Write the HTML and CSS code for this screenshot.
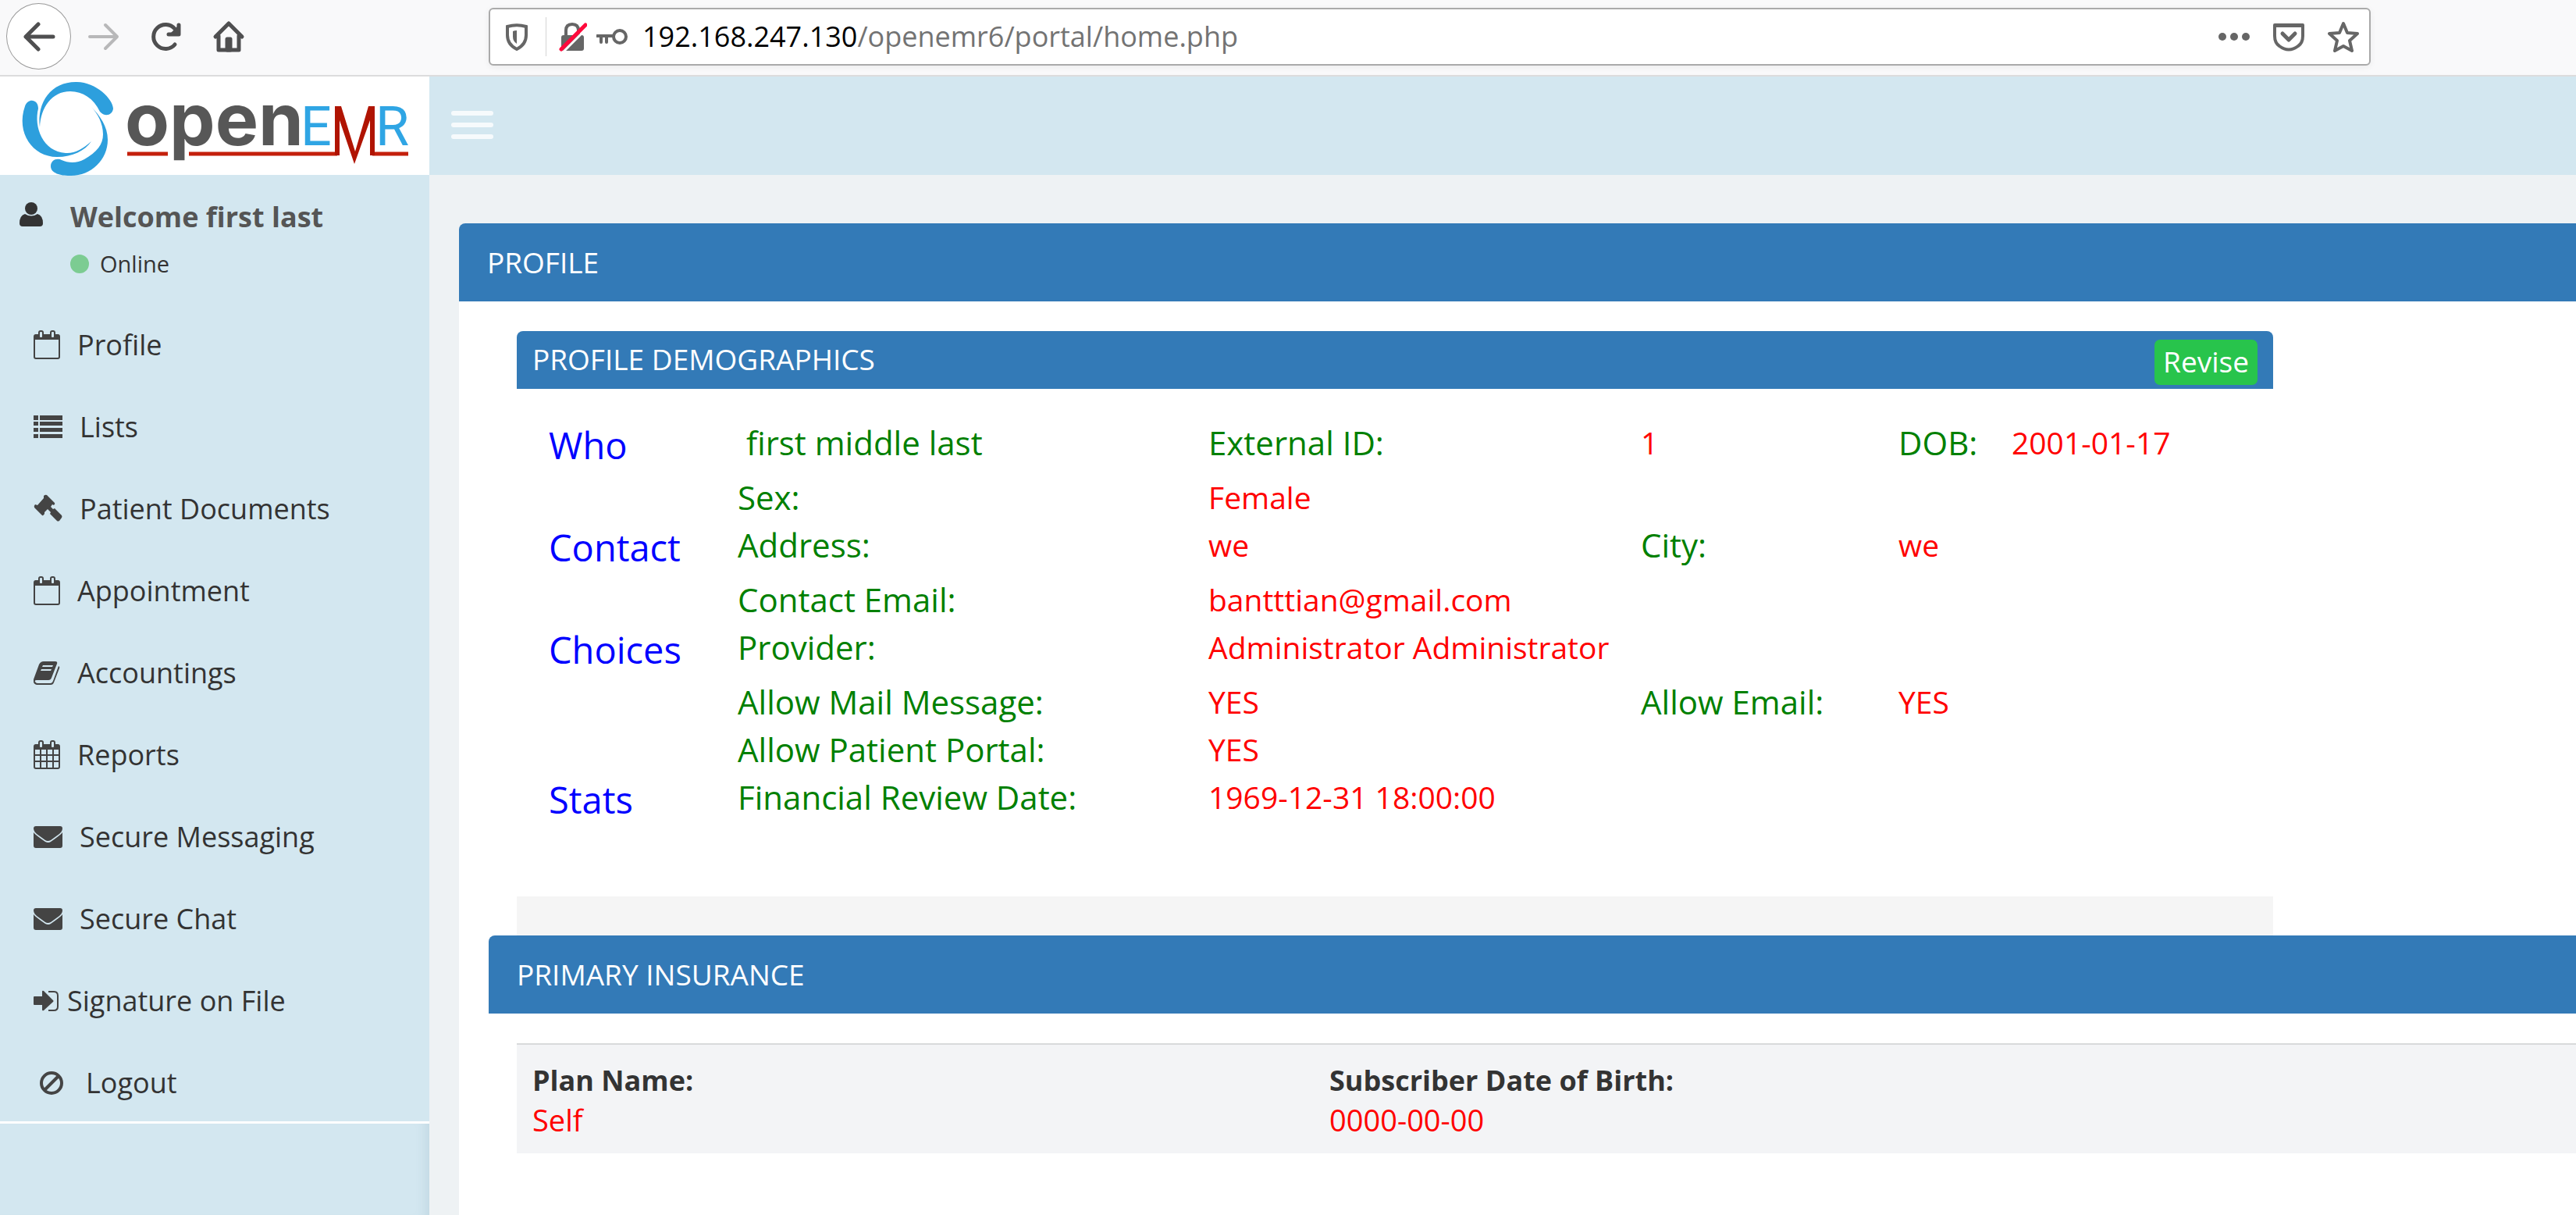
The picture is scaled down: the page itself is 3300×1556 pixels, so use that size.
FILE: index.html
```html
<!DOCTYPE html>
<html lang="en">
<head>
<meta charset="utf-8">
<meta name="viewport" content="width=device-width, initial-scale=1">
<title>OpenEMR Portal</title>
<link rel="stylesheet" href="styles.css">
</head>
<body>
<svg class="sprite" aria-hidden="true">
  <symbol id="calendar" viewBox="0 0 34 37">
    <rect x="1" y="6" width="32" height="30" rx="2" fill="none" stroke="currentColor" stroke-width="2"/>
    <path d="M1 12V8q0-3 3-3h26q3 0 3 3v4z"/>
    <rect class="hole" x="7" y="1" width="5" height="9" rx="2" stroke="currentColor" stroke-width="2"/>
    <rect class="hole" x="22" y="1" width="5" height="9" rx="2" stroke="currentColor" stroke-width="2"/>
  </symbol>
  <symbol id="envelope" viewBox="0 0 37 28">
    <path d="M3 0h31q3 0 3 3c0 3-2 5-4 7L22 18q-4 2-7 0L4 10C2 8 0 6 0 3q0-3 3-3z"/>
    <path d="M0 8q2 3 15 12 4 2 7 0Q35 11 37 8v17q0 3-3 3H3q-3 0-3-3z"/>
  </symbol>
</svg>

<header class="toolbar">
  <nav class="toolbar-nav" aria-label="Browser">
    <button class="tool tool-back" type="button" aria-label="Back">
      <svg width="42" height="38" viewBox="0 0 42 38" fill="none" stroke="currentColor" stroke-width="5" stroke-linecap="round" stroke-linejoin="round"><path d="M39 19H4M20 3L4 19l16 16"/></svg>
    </button>
    <button class="tool tool-forward" type="button" aria-label="Forward">
      <svg width="42" height="38" viewBox="0 0 42 38" fill="none" stroke="currentColor" stroke-width="4" stroke-linecap="round" stroke-linejoin="round"><path d="M3 19h35M23 4l15 15-15 15"/></svg>
    </button>
    <button class="tool tool-reload" type="button" aria-label="Reload">
      <svg width="40" height="38" viewBox="0 0 40 38" fill="none" stroke="currentColor" stroke-width="5" stroke-linecap="round" stroke-linejoin="round"><path d="M31 29A15.500 15.500 0 1 1 31 9"/><path d="M36 4v12H23"/><path d="M36 4v12H24L34 6" fill="currentColor" stroke="none"/></svg>
    </button>
    <button class="tool tool-home" type="button" aria-label="Home">
      <svg width="42" height="42" viewBox="0 0 42 42" fill="none" stroke="currentColor" stroke-width="5" stroke-linecap="round" stroke-linejoin="round"><path d="M4 21L21 4l17 17M8 20v18h26V20"/><path d="M19 38V24h4v14z"/></svg>
    </button>
  </nav>
  <div class="urlbar">
    <svg width="30" height="36" viewBox="0 0 30 36" fill="none" stroke="currentColor" stroke-width="4"><path d="M3 5q12-3.500 24 0v11q0 12-12 18Q3 28 3 16z"/><path d="M15 10q-3 0-5 1v7q0 6 5 9z" fill="currentColor" stroke="none"/></svg>
    <span class="urlbar-rule"></span>
    <svg class="lock" width="36" height="38" viewBox="0 0 36 38"><path d="M9 18v-7q0-8 8-8t8 8v7" fill="none" stroke="currentColor" stroke-width="4"/><rect x="3" y="17" width="29" height="20" rx="3" fill="currentColor"/><path d="M6 38L37 7" stroke="#fff" stroke-width="3"/><path d="M3 35L34 4" stroke="#ff0a3c" stroke-width="5" stroke-linecap="round"/></svg>
    <svg width="41" height="24" viewBox="0 0 41 24" fill="none" stroke="currentColor"><circle cx="30" cy="12" r="8" stroke-width="4"/><path d="M1 11h21M6 11v8M13 11v8" stroke-width="4" stroke-linecap="round"/></svg>
    <div class="url" role="textbox" aria-label="Address" tabindex="0"><span class="url-host">192.168.247.130</span>/openemr6/portal/home.php</div>
    <button class="url-tool" type="button" aria-label="Page actions">
      <svg width="40" height="40" viewBox="0 0 40 40" fill="currentColor"><circle cx="5" cy="20" r="5"/><circle cx="20" cy="20" r="5"/><circle cx="35" cy="20" r="5"/></svg>
    </button>
    <button class="url-tool" type="button" aria-label="Save to Pocket">
      <svg width="40" height="40" viewBox="0 0 40 40" fill="none" stroke="currentColor" stroke-width="4" stroke-linecap="round" stroke-linejoin="round"><path d="M2 5h36v14q0 9-6 13-12 9-24 0-6-4-6-13z"/><path d="M3 6h34" /><path d="M12 16l8 8 8-8" stroke-width="5"/></svg>
    </button>
    <button class="url-tool" type="button" aria-label="Bookmark">
      <svg width="40" height="40" viewBox="0 0 40 40" fill="none" stroke="currentColor" stroke-width="4" stroke-linejoin="round"><path d="M20 3l5 12 13 1-10 9 3 13-11-6-11 6 3-13-10-9 13-1z"/></svg>
    </button>
  </div>
</header>

<div class="portal">
  <aside class="sidebar">
    <a class="brand" href="#" aria-label="openEMR">
      <svg class="logo" viewBox="0 98 550 126">
        <g fill="#2d9fdd">
          <path d="M51 163C47 130 66 105 97 105c25-1 48 22 48 34-1 9-11 11-17 4-8-17-22-26-38-26-24 0-38 21-39 46z"/>
          <path d="M49 139c0-12-13-14-17-3-12 34 10 65 41 65 20 0 36-8 44-20-11 10-22 16-33 15-29-2-41-33-35-57z"/>
          <path d="M117 137c11 11 21 25 21 42 0 26-22 47-49 46-11 0-24-3-24-12 0-8 8-11 14-8 9 4 20 4 29-1 16-9 24-19 24-32 0-14-7-27-15-35z"/>
        </g>
        <path d="M163 197h52M242 197h190M477 197h46" fill="none" stroke="#c4200c" stroke-width="5"/>
        <path d="M429 136h8l18 58 17-58h8v63h-6v-45l-20 56-19-56v45h-6z" fill="#b01402"/>
        <text class="logo-open" x="160" y="186">open</text>
        <text class="logo-emr" x="385" y="186">E</text>
        <text class="logo-emr" x="481" y="186">R</text>
      </svg>
    </a>
    <div class="user">
      <svg class="user-icon" width="30" height="38" viewBox="0 0 30 38"><ellipse cx="15" cy="8" rx="8" ry="8"/><path d="M7 15q8 5 16 0 7 2 7 12 0 4-4 4H4q-4 0-4-4Q0 17 7 15z"/></svg>
      <div>
        <p class="user-name">Welcome first last</p>
        <p class="user-status"><span class="dot"></span>Online</p>
      </div>
    </div>
    <nav class="menu" aria-label="Portal">
      <a class="menu-item" href="#"><svg width="34" height="37"><use href="#calendar"/></svg>Profile</a>
      <a class="menu-item" href="#"><svg width="37" height="30" viewBox="0 0 37 30"><path d="M0 0h6v6H0zM8 0h29v6H8zM0 8h6v5H0zM8 8h29v5H8zM0 16h6v5H0zM8 16h29v5H8zM0 24h6v5H0zM8 24h29v5H8z"/></svg>Lists</a>
      <a class="menu-item" href="#"><svg width="37" height="37" viewBox="0 0 37 37"><path d="M13 2q2-2 4-1l10 10q1 1-1 3l-2-1-2 3 3 3 2-1 9 9q1 2 0 3l-3 4q-2 1-3 0l-9-9 1-2-4-4-4 4 0 2q-2 3-3 2L1 17q-1-2 1-4l3 1 8-9z"/></svg>Patient Documents</a>
      <a class="menu-item" href="#"><svg width="34" height="37"><use href="#calendar"/></svg>Appointment</a>
      <a class="menu-item" href="#"><svg width="34" height="32" viewBox="0 0 34 32"><path d="M13 1h15q3 0 2 3l-7 18q-1 3-4 3H4q-3 0-2 2 1 2 3 2h17q2 0 3-3l7-19q2 1 1 3l-7 18q-1 3-4 3H4q-5-1-4-7L7 5q2-4 6-4z"/><path class="hole" d="M12 6h13l-1 2H11zM10 11h13l-1 2H9z"/></svg>Accountings</a>
      <a class="menu-item" href="#"><svg width="34" height="37" viewBox="0 0 34 37"><use href="#calendar"/><path d="M9 12v24M17 12v24M25 12v24M1 19h32M1 27h32" stroke="currentColor" stroke-width="2"/></svg>Reports</a>
      <a class="menu-item" href="#"><svg width="37" height="28"><use href="#envelope"/></svg>Secure Messaging</a>
      <a class="menu-item" href="#"><svg width="37" height="28"><use href="#envelope"/></svg>Secure Chat</a>
      <a class="menu-item menu-item-tight" href="#"><svg width="32" height="28" viewBox="0 0 32 28"><path d="M0 9q0-1 1-1h10V2q0-2 2-1l12 12q1 1 0 2L13 26q-2 1-2-1v-6H1q-1 0-1-1z"/><path d="M19 2h7q5 0 5 5v14q0 5-5 5h-7" fill="none" stroke="currentColor" stroke-width="2"/></svg>Signature on File</a>
      <a class="menu-item menu-item-wide" href="#"><svg width="32" height="32" viewBox="0 0 32 32" fill="none" stroke="currentColor" stroke-width="4"><circle cx="16" cy="16" r="13"/><path d="M7 25L25 7"/></svg>Logout</a>
    </nav>
    <div class="sidebar-rest"></div>
  </aside>

  <main class="main">
    <div class="topbar">
      <button class="menu-toggle" type="button" aria-label="Toggle menu"><span></span><span></span><span></span></button>
    </div>
    <div class="content">
      <section class="panel">
        <h2 class="panel-title">PROFILE</h2>
        <div class="panel-body">
          <section class="demographics">
            <div class="demographics-head">
              <h3 class="demographics-title">PROFILE DEMOGRAPHICS</h3>
              <button class="revise" type="button">Revise</button>
            </div>
            <div class="demographics-body">
              <table class="facts">
                <colgroup><col class="c1"><col class="c2"><col class="c3"><col class="c4"><col class="c5"><col></colgroup>
                <tbody>
                <tr class="tall"><th scope="rowgroup" rowspan="2" class="group">Who</th><td class="label">&nbsp;first middle last</td><td class="label">External ID:</td><td>1</td><td class="label">DOB:</td><td>2001-01-17</td></tr>
                <tr><td class="label">Sex:</td><td>Female</td></tr>
                </tbody>
                <tbody>
                <tr class="tall"><th scope="rowgroup" rowspan="2" class="group">Contact</th><td class="label">Address:</td><td>we</td><td class="label">City:</td><td>we</td></tr>
                <tr><td class="label">Contact Email:</td><td>bantttian@gmail.com</td></tr>
                </tbody>
                <tbody>
                <tr class="tall"><th scope="rowgroup" rowspan="3" class="group">Choices</th><td class="label">Provider:</td><td>Administrator Administrator</td></tr>
                <tr><td class="label">Allow Mail Message:</td><td>YES</td><td class="label">Allow Email:</td><td>YES</td></tr>
                <tr><td class="label">Allow Patient Portal:</td><td>YES</td></tr>
                </tbody>
                <tbody>
                <tr><th scope="rowgroup" class="group">Stats</th><td class="label">Financial Review Date:</td><td>1969-12-31 18:00:00</td></tr>
                </tbody>
              </table>
            </div>
            <div class="demographics-foot"></div>
          </section>
          <section class="insurance">
            <h2 class="panel-title">PRIMARY INSURANCE</h2>
            <div class="insurance-body">
              <table class="plan">
                <thead><tr><th class="plan-col" scope="col">Plan Name:</th><th scope="col">Subscriber Date of Birth:</th></tr></thead>
                <tbody><tr><td>Self</td><td>0000-00-00</td></tr></tbody>
              </table>
            </div>
          </section>
        </div>
      </section>
    </div>
  </main>
</div>
</body>
</html>
```
FILE: styles.css
```css
* { box-sizing: border-box; }

body {
  margin: 0;
  min-height: 100vh;
  display: flex;
  flex-direction: column;
  font-family: "Open Sans", "Noto Sans", sans-serif;
  font-size: 36px;
  line-height: 50px;
  color: #333;
  background: #eef2f4;
}

h2, h3, p { margin: 0; }
svg { display: block; flex: none; }
a { color: inherit; text-decoration: none; }
button { padding: 0; border: 0; background: none; color: inherit; font: inherit; }
table { border-collapse: collapse; table-layout: fixed; width: 100%; }
th, td { padding: 0; text-align: left; vertical-align: top; }
.sprite { position: absolute; width: 0; height: 0; }

/* Browser toolbar */
.toolbar {
  display: grid;
  grid-template-columns: 626px 1fr 263px;
  align-items: center;
  height: 98px;
  padding-bottom: 3px;
  background: #f9f9fa;
  border-bottom: 2px solid #dcdcdd;
}
.toolbar-nav { display: flex; align-items: center; gap: 39px; padding-left: 8px; color: #4f4f50; }
.tool-back {
  display: flex;
  align-items: center;
  justify-content: center;
  width: 83px;
  height: 85px;
  margin-right: -18px;
  border: 1px solid #999;
  border-radius: 50%;
  background: #fff;
}
.tool-forward { color: #b8b8b9; }
.urlbar {
  display: flex;
  align-items: center;
  height: 74px;
  padding: 0 13px 0 19px;
  border: 2px solid #aaa;
  border-radius: 6px;
  background: #fff;
  box-shadow: 0 2px 8px rgba(0, 0, 0, 0.06);
  color: #666;
}
.urlbar-rule { width: 1px; height: 50px; margin: 0 16px 0 22px; background: #d4d4d4; }
.lock { margin-right: 12px; }
.url { flex: 1; padding-left: 18px; color: #737373; }
.url-host { color: #000; }
.url-tool { margin-left: 30px; }

/* Page frame */
.portal { flex: 1; display: flex; }
.sidebar {
  flex: none;
  display: flex;
  flex-direction: column;
  width: 550px;
  background: #d3e7f0;
}
.main { flex: 1; min-width: 0; display: flex; flex-direction: column; }

/* Sidebar */
.brand { position: relative; height: 126px; background: #fff; }
.logo { width: 550px; height: 126px; overflow: visible; }
.logo-open { font: 700 93px Inter, sans-serif; fill: #575757; }
.logo-emr { font: 400 70px Roboto, sans-serif; fill: #2fa5e4; }

.user { display: flex; height: 165px; padding: 24px 0 0 25px; }
.user-icon { margin-top: 11px; margin-right: 35px; fill: #333; }
.user-name { font-weight: 700; line-height: 60px; color: #555; }
.user-status { display: flex; align-items: center; gap: 14px; font-size: 29px; line-height: 60px; }
.dot { width: 24px; height: 24px; border-radius: 50%; background: #7ccc92; }

.menu { border-bottom: 3px solid #fff; }
.menu-item { display: flex; align-items: center; gap: 22px; height: 105px; padding-left: 43px; }
.menu-item:last-child { height: 102px; padding-top: 3px; }
.menu-item-tight { gap: 11px; }
.menu-item-wide { gap: 28px; padding-left: 50px; }
.menu-item svg { color: #444; }
.menu-item svg:not([fill]) { fill: #444; }
.hole { fill: #d3e7f0; }
.sidebar-rest { flex: 1; box-shadow: inset -16px 0 16px -14px rgba(90, 130, 150, 0.18); }

/* Main column */
.topbar { display: flex; align-items: center; height: 126px; padding: 0 0 2px 28px; background: #d3e7f0; }
.menu-toggle { display: flex; flex-direction: column; gap: 9px; width: 54px; }
.menu-toggle span { height: 6px; border-radius: 3px; background: #f6fafc; }
.content { flex: 1; display: flex; padding: 62px 0 0 38px; }

.panel { flex: 1; min-width: 0; background: #fff; border-radius: 8px 0 0 0; }
.panel-title {
  padding: 25px 36px;
  border-radius: 8px 0 0 0;
  background: #337ab7;
  color: #fff;
  font-size: 37px;
  font-weight: 400;
}
.panel-body { padding: 38px 0 0 38px; }

.demographics { max-width: 2250px; margin-left: 36px; }
.demographics-head {
  display: flex;
  justify-content: space-between;
  align-items: flex-start;
  height: 74px;
  padding: 11px 20px 0;
  border-radius: 8px 8px 0 0;
  background: #337ab7;
  color: #fff;
  font-size: 37px;
}
.demographics-title { font-size: 37px; font-weight: 400; }
.revise { width: 132px; height: 58px; padding-bottom: 2px; border-radius: 7px; background: #28c44c; }
.demographics-body { padding: 38px 0 90px 41px; }

.facts { font-size: 39px; line-height: 61px; color: #f00; }
.facts tr { height: 61px; }
.facts .tall { height: 70px; }
.facts .label { font-size: 42px; color: #008000; }
.facts .group { font-size: 47px; font-weight: 400; line-height: 68px; color: #00f; }
.c1 { width: 242px; }
.c2 { width: 603px; }
.c3 { width: 554px; }
.c4 { width: 330px; }
.c5 { width: 145px; }
.demographics-foot { height: 50px; background: #f5f5f5; }

.insurance-body { padding: 38px 0 0 36px; }
.plan { border-top: 2px solid #d8dadb; background: #f3f4f6; }
.plan th { padding: 21px 20px 0; }
.plan td { padding: 0 20px 18px; font-size: 38px; color: #f00; }
.plan-col { width: 1021px; }
```
